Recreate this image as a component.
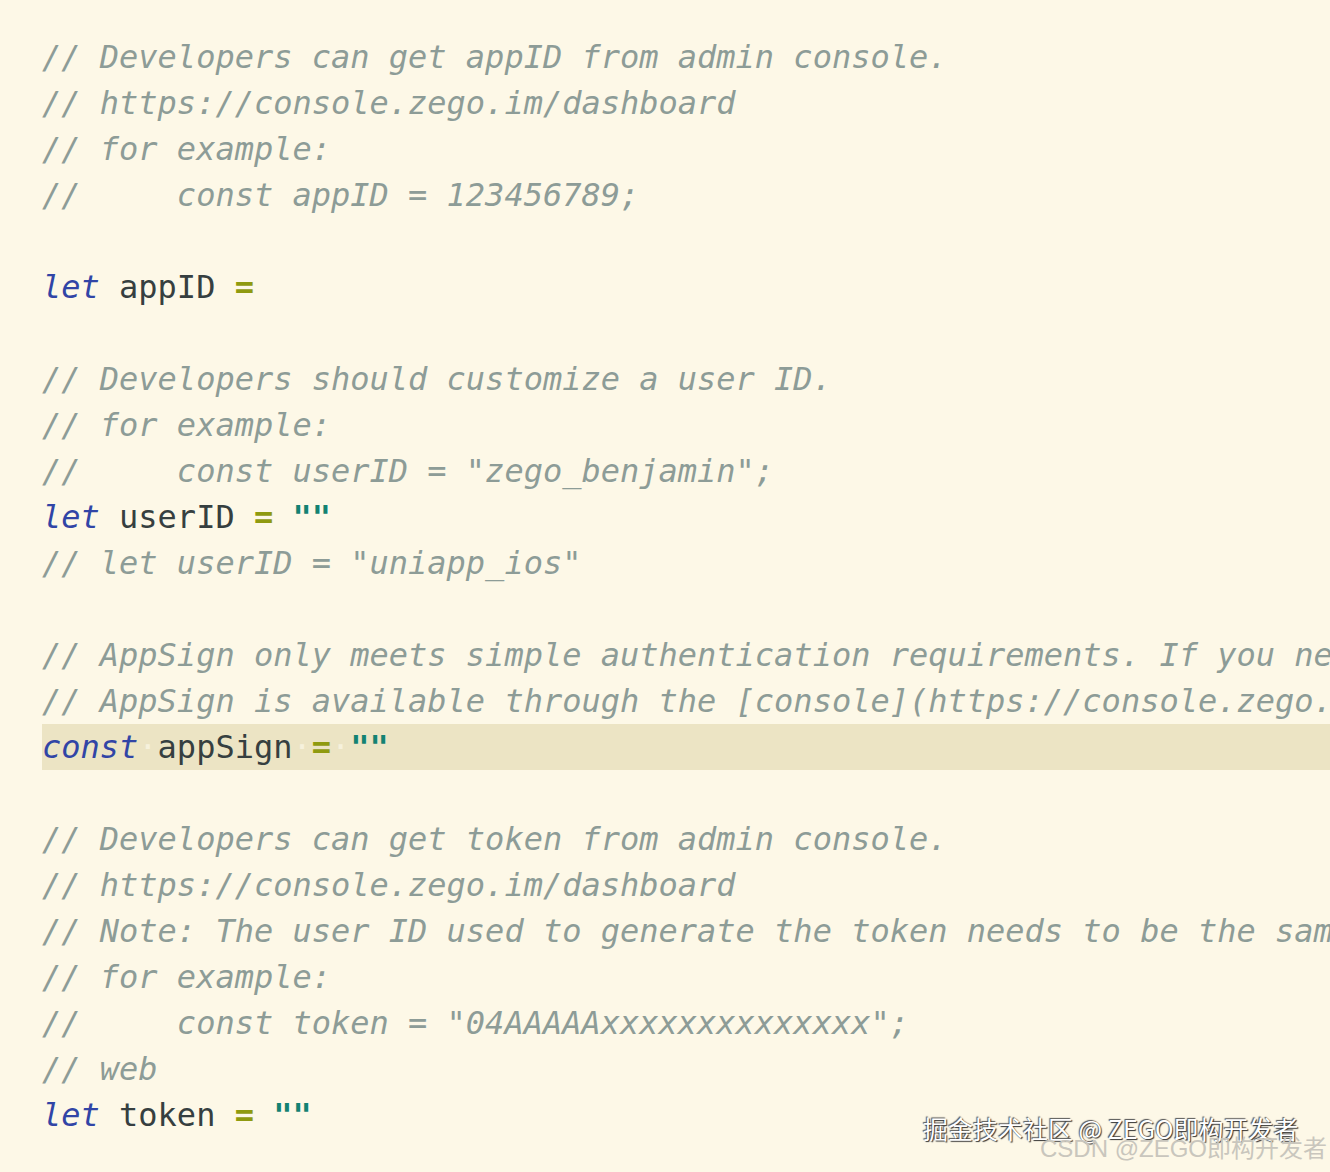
import React from "react";

const C = ({ children }) => <span className="italic text-[#8d9c97]">{children}</span>;
const K = ({ children }) => <span className="italic text-[#3145a6]">{children}</span>;
const I = ({ children }) => <span className="text-[#363f40]">{children}</span>;
const E = () => <span className="font-bold text-[#8f9a10]">=</span>;
const S = () => <span className="font-bold text-[#138272]">""</span>;
const Dot = () => <span className="text-[#f6f1dc]">·</span>;

function Line({ children, hl }) {
  return (
    <div className={"h-[46px] leading-[46px] whitespace-pre ml-[42px] " + (hl ? "bg-[#ece4c4]" : "")}>
      {children ?? " "}
    </div>
  );
}

export default function App() {
  return (
    <div className="relative w-[1330px] h-[1172px] overflow-hidden bg-[#fdf8e7] pt-[34px] text-[32px] font-['DejaVu_Sans_Mono',monospace]">
      <Line><C>// Developers can get appID from admin console.</C></Line>
      <Line><C>// https://console.zego.im/dashboard</C></Line>
      <Line><C>// for example:</C></Line>
      <Line><C>//     const appID = 123456789;</C></Line>
      <Line />
      <Line><K>let</K> <I>appID</I> <E /></Line>
      <Line />
      <Line><C>// Developers should customize a user ID.</C></Line>
      <Line><C>// for example:</C></Line>
      <Line><C>//     const userID = "zego_benjamin";</C></Line>
      <Line><K>let</K> <I>userID</I> <E /> <S /></Line>
      <Line><C>// let userID = "uniapp_ios"</C></Line>
      <Line />
      <Line><C>// AppSign only meets simple authentication requirements. If you need to upgrade the authentication method</C></Line>
      <Line><C>// AppSign is available through the [console](https://console.zego.im/dashboard)</C></Line>
      <Line hl>
        <K>const</K><Dot /><I>appSign</I><Dot /><E /><Dot /><S />
      </Line>
      <Line />
      <Line><C>// Developers can get token from admin console.</C></Line>
      <Line><C>// https://console.zego.im/dashboard</C></Line>
      <Line><C>// Note: The user ID used to generate the token needs to be the same as the userID filled in above!</C></Line>
      <Line><C>// for example:</C></Line>
      <Line><C>//     const token = "04AAAAAxxxxxxxxxxxxxx";</C></Line>
      <Line><C>// web</C></Line>
      <Line><K>let</K> <I>token</I> <E /> <S /></Line>

      <div className="absolute left-[923px] top-[1111px] text-[25px] leading-[34px] text-white whitespace-nowrap font-['Noto_Sans_CJK_SC',sans-serif] [text-shadow:1px_1px_1px_#333,-1px_-1px_1px_#555]">
        掘金技术社区 @ ZEGO即构开发者
      </div>
      <div className="absolute left-[1040px] top-[1133px] text-[24px] leading-[32px] text-[#c9c6bd] whitespace-nowrap font-['Liberation_Sans','Noto_Sans_CJK_SC',sans-serif]">
        CSDN @ZEGO即构开发者
      </div>
    </div>
  );
}
